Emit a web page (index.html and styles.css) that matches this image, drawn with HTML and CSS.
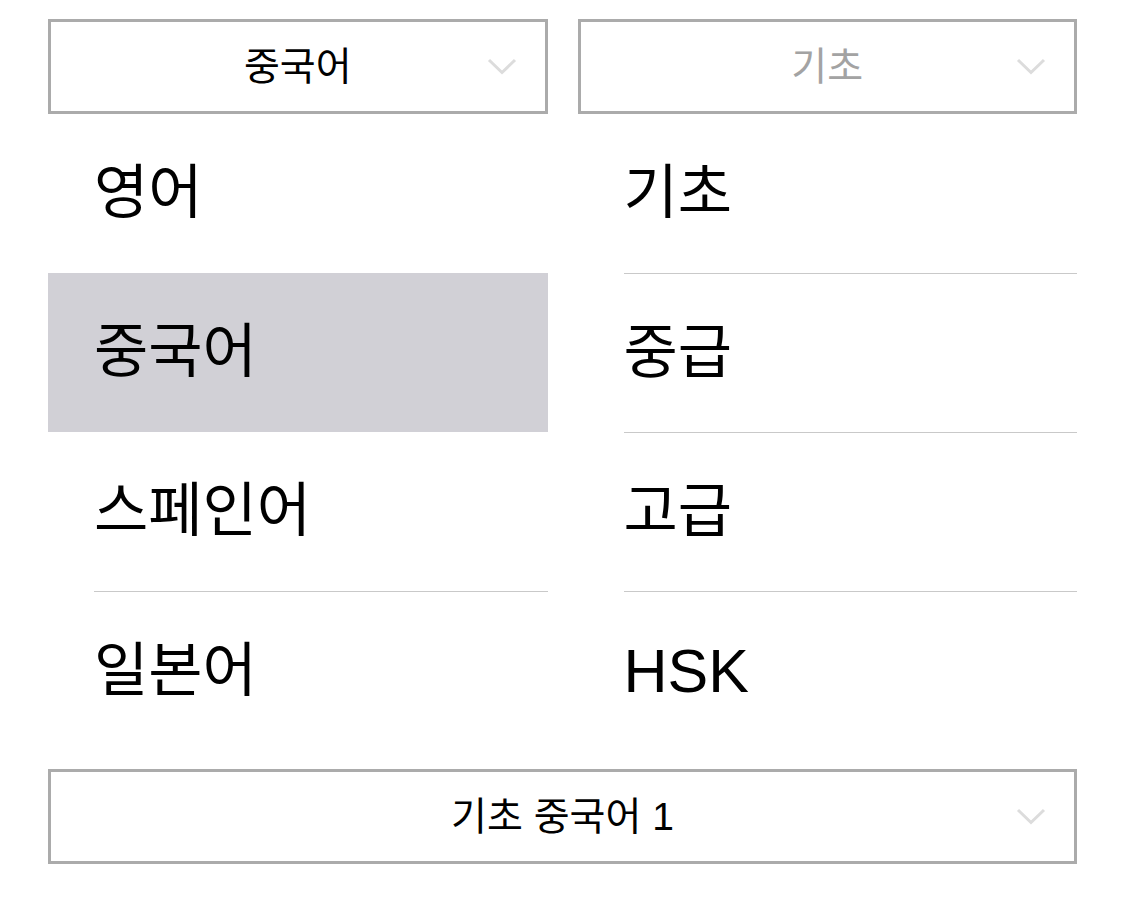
FILE: index.html
```html
<!DOCTYPE html>
<html lang="ko">
<head>
    <meta charset="UTF-8">
    <meta name="viewport" content="width=device-width, initial-scale=1.0">
    <title>강좌 선택</title>
    <link rel="stylesheet" href="styles.css">
</head>
<body>
    <div class="page">
        <div class="pickers">
            <div class="select">
                <span></span>
                <span class="select-text">중국어</span>
                <svg class="chev" width="30" height="17" viewBox="0 0 30 17"><polyline points="2,2 15,14.5 28,2"/></svg>
            </div>
            <div class="select placeholder">
                <span></span>
                <span class="select-text">기초</span>
                <svg class="chev" width="30" height="17" viewBox="0 0 30 17"><polyline points="2,2 15,14.5 28,2"/></svg>
            </div>
        </div>

        <div class="lists">
            <ul class="list">
                <li class="item"><span class="label">영어</span></li>
                <li class="item selected"><span class="label">중국어</span></li>
                <li class="item after-selected"><span class="label">스페인어</span></li>
                <li class="item"><span class="label">일본어</span></li>
            </ul>
            <ul class="list">
                <li class="item"><span class="label">기초</span></li>
                <li class="item"><span class="label">중급</span></li>
                <li class="item"><span class="label">고급</span></li>
                <li class="item"><span class="label latin">HSK</span></li>
            </ul>
        </div>

        <div class="select wide">
            <span></span>
            <span class="select-text">기초 중국어 1</span>
            <svg class="chev" width="30" height="17" viewBox="0 0 30 17"><polyline points="2,2 15,14.5 28,2"/></svg>
        </div>
    </div>
</body>
</html>
```

FILE: styles.css
```css
body {
    margin: 0;
    background: #fff;
    font-family: "Liberation Sans", "Noto Sans CJK KR", sans-serif;
    color: #000;
}
.page {
    padding: 19px 48px 0 48px;
}
.pickers {
    display: grid;
    grid-template-columns: 1fr 1fr;
    gap: 30px;
}
.select {
    height: 95px;
    box-sizing: border-box;
    border: 3px solid #ababab;
    display: grid;
    grid-template-columns: 1fr auto 1fr;
    align-items: center;
}
.select-text {
    font-size: 39px;
    line-height: 1;
}
.select.placeholder .select-text {
    color: #a3a3a3;
}
.chev {
    justify-self: end;
    margin-right: 28px;
}
.chev polyline {
    fill: none;
    stroke: #dcdcdc;
    stroke-width: 3;
}
.lists {
    display: grid;
    grid-template-columns: 1fr 1fr;
    gap: 30px;
}
.list {
    list-style: none;
    margin: 0;
    padding: 0;
}
.item {
    height: 159px;
    display: flex;
    padding-left: 46px;
}
.item + .item .label {
    border-top: 1px solid #c9c9c9;
}
.item.selected {
    background: #d1d0d6;
}
.item.selected .label,
.item.after-selected .label {
    border-top: none;
}
.label {
    flex: 1;
    display: flex;
    align-items: center;
    font-size: 59px;
    line-height: 1;
}
.label.latin {
    font-size: 61px;
}
.select.wide {
    margin-top: 19px;
}
```
